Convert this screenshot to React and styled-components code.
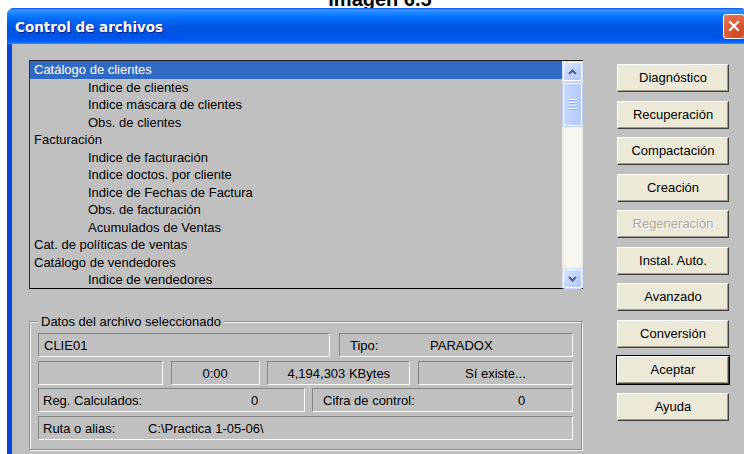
import styled, { createGlobalStyle } from "styled-components";

const GlobalStyle = createGlobalStyle`
    html, body {
        margin: 0;
        padding: 0;
        background: #fff;
        overflow: hidden;
    }
    body {
        font-family: "Liberation Sans", Arial, sans-serif;
        font-size: 13px;
        color: #000;
    }
`

const Page = styled.div`
    width: 744px;
    height: 454px;
    overflow: hidden;
`

const Caption = styled.div`
    height: 8px;
    overflow: hidden;
    text-align: center;
    padding-left: 16px;
    & span {
        display: block;
        margin-top: -11px;
        font: bold 20px/20px "Liberation Sans", Arial, sans-serif;
    }
`

const Window = styled.div`
    margin-left: 7px;
    width: 740px;
    height: 446px;
    display: flex;
    flex-direction: column;
    border-radius: 7px 7px 0 0;
    overflow: hidden;
    background: #0846d8;
`

const TitleBar = styled.div`
    flex: none;
    height: 36px;
    display: flex;
    align-items: center;
    justify-content: space-between;
    padding: 0 2px 0 8px;
    background: linear-gradient(
        to bottom,
        #0058ee 0%, #3d93ff 6%, #288eff 10%, #127dff 18%, #036ffc 28%,
        #0262ee 40%, #0057e5 52%, #0054e3 70%, #0055eb 84%, #005bf5 91%,
        #026afe 95%, #3c8cf6 100%
    );
`

const Title = styled.span`
    font: bold 13.5px "DejaVu Sans", Verdana, sans-serif;
    color: #fff;
    text-shadow: 1px 1px 0 #0a1e8a;
    margin-top: 1px;
`

const CloseButton = styled.div`
    width: 22px;
    height: 25px;
    box-sizing: border-box;
    border: 1px solid #fff;
    border-radius: 3px;
    background: radial-gradient(circle at 70% 75%, #cc4622 0%, #dd5a35 45%, #e87b58 100%);
    display: flex;
    align-items: center;
    justify-content: center;
`

const Client = styled.div`
    flex: 1;
    margin-left: 5px;
    background: #c0c0c0;
    display: flex;
    gap: 34px;
    padding: 16px 0 0 17px;
`

const LeftColumn = styled.div`
    width: 554px;
    display: flex;
    flex-direction: column;
`

const ListBox = styled.div`
    height: 229px;
    box-sizing: border-box;
    display: flex;
    border-top: 1px solid #202020;
    border-left: 1px solid #303030;
    border-bottom: 1px solid #000;
`

const Items = styled.div`
    flex: 1;
    padding-top: 0;
`

const Item = styled.div`
    height: 17.5px;
    line-height: 18px;
    padding-left: ${p => (p.$sub ? 58 : 4)}px;
    background: ${p => (p.$selected ? "#316ac5" : "transparent")};
    color: ${p => (p.$selected ? "#fff" : "#000")};
    white-space: nowrap;
`

const ScrollTrack = styled.div`
    width: 21px;
    display: flex;
    flex-direction: column;
    align-items: center;
    background: linear-gradient(to right, #eeede5, #f7f6f1 30%, #f7f6f1 80%, #edece6);
`

const ScrollButton = styled.div`
    width: 19px;
    height: 19px;
    box-sizing: border-box;
    margin-top: ${p => (p.$down ? "auto" : "1px")};
    border: 1px solid #fff;
    border-radius: 2px;
    background: linear-gradient(135deg, #dbe6ff 0%, #c3d4fd 50%, #b1c6f7 100%);
    box-shadow: 0 0 0 1px #cfdcf8;
    display: flex;
    align-items: center;
    justify-content: center;
`

const Thumb = styled.div`
    width: 19px;
    height: 43px;
    margin-top: 2px;
    box-sizing: border-box;
    border: 1px solid #fff;
    border-radius: 2px;
    background: linear-gradient(to right, #c9d8fc, #bccffb 60%, #b4c8f8);
    box-shadow: 0 0 0 1px #b6c9f3;
    display: flex;
    flex-direction: column;
    align-items: center;
    justify-content: center;
    gap: 1px;
    & i {
        display: block;
        width: 8px;
        height: 1px;
        background: #eef4fe;
        border-bottom: 1px solid #8fb1f5;
    }
`

const Group = styled.fieldset`
    margin: 25px 0 0;
    width: 553px;
    box-sizing: border-box;
    padding: 4px 8px 9px;
    border: 1px solid #8c8c8c;
    box-shadow: inset 1px 1px 0 #f4f4f0, 1px 1px 0 #f4f4f0;
    & legend {
        padding: 0 3px;
        margin-left: 0;
        background: #c0c0c0;
        line-height: 15px;
    }
`

const Rows = styled.div`
    display: flex;
    flex-direction: column;
    gap: 3.5px;
`

const Row = styled.div`
    display: grid;
    grid-template-columns: ${p => p.$cols};
    justify-content: space-between;
`

const Field = styled.div`
    height: 24px;
    box-sizing: border-box;
    border-top: 1px solid #858585;
    border-left: 1px solid #858585;
    border-bottom: 1px solid #fbfbf8;
    border-right: 1px solid #fbfbf8;
    display: flex;
    align-items: center;
    justify-content: ${p => (p.$center ? "center" : "flex-start")};
    padding: 1px 0 0 ${p => p.$pad ?? 4}px;
    white-space: nowrap;
`

const Label = styled.span`
    display: inline-block;
    width: ${p => p.$w}px;
`

const Buttons = styled.div`
    margin-top: 4px;
    display: flex;
    flex-direction: column;
    gap: 8.5px;
`

const Button = styled.div`
    width: 112px;
    height: 28px;
    box-sizing: border-box;
    background: #ece9d8;
    border: 1px solid;
    border-color: #fff #404040 #404040 #fff;
    box-shadow: ${p => (p.$default ? "0 0 0 1px #000, " : "")}inset -1px -1px 0 #9d9a8c;
    display: flex;
    align-items: center;
    justify-content: center;
    padding-bottom: 1px;
    color: ${p => (p.$disabled ? "#aca899" : "#000")};
    text-shadow: ${p => (p.$disabled ? "1px 1px 0 #fff" : "none")};
`

const files = [
    { name: "Catálogo de clientes", selected: true },
    { name: "Indice de clientes", sub: true },
    { name: "Indice máscara de clientes", sub: true },
    { name: "Obs. de clientes", sub: true },
    { name: "Facturación" },
    { name: "Indice de facturación", sub: true },
    { name: "Indice doctos. por cliente", sub: true },
    { name: "Indice de Fechas de Factura", sub: true },
    { name: "Obs. de facturación", sub: true },
    { name: "Acumulados de Ventas", sub: true },
    { name: "Cat. de políticas de ventas" },
    { name: "Catálogo de vendedores" },
    { name: "Indice de vendedores", sub: true },
]

const actions = [
    { label: "Diagnóstico" },
    { label: "Recuperación" },
    { label: "Compactación" },
    { label: "Creación" },
    { label: "Regeneración", disabled: true },
    { label: "Instal. Auto." },
    { label: "Avanzado" },
    { label: "Conversión" },
    { label: "Aceptar", isDefault: true },
    { label: "Ayuda" },
]

function Arrow({ down }) {
    return (
        <svg width="9" height="6" viewBox="0 0 9 6">
            <polyline
                points={down ? "1,1 4.5,4.5 8,1" : "1,5 4.5,1.5 8,5"}
                fill="none"
                stroke="#4d6185"
                strokeWidth="2"
            />
        </svg>
    );
}

function App() {
    return (
        <Page>
            <GlobalStyle />
            <Caption><span>Imagen 6.5</span></Caption>
            <Window>
                <TitleBar>
                    <Title>Control de archivos</Title>
                    <CloseButton>
                        <svg width="12" height="12" viewBox="0 0 12 12">
                            <path d="M2 2 L10 10 M10 2 L2 10" stroke="#fff" strokeWidth="2.2" strokeLinecap="square" />
                        </svg>
                    </CloseButton>
                </TitleBar>
                <Client>
                    <LeftColumn>
                        <ListBox>
                            <Items>
                                {files.map(f => (
                                    <Item key={f.name} $sub={f.sub} $selected={f.selected}>{f.name}</Item>
                                ))}
                            </Items>
                            <ScrollTrack>
                                <ScrollButton><Arrow /></ScrollButton>
                                <Thumb><i /><i /><i /><i /></Thumb>
                                <ScrollButton $down><Arrow down /></ScrollButton>
                            </ScrollTrack>
                        </ListBox>
                        <Group>
                            <legend>Datos del archivo seleccionado</legend>
                            <Rows>
                                <Row $cols="292px 234px">
                                    <Field $pad={5}>CLIE01</Field>
                                    <Field $pad={10}><Label $w={80}>Tipo:</Label>PARADOX</Field>
                                </Row>
                                <Row $cols="125px 89px 143px 155px">
                                    <Field />
                                    <Field $center $pad={0}>0:00</Field>
                                    <Field $center $pad={0}>4,194,303 KBytes</Field>
                                    <Field $center $pad={0}>Sí existe...</Field>
                                </Row>
                                <Row $cols="267px 261px">
                                    <Field><Label $w={208}>Reg. Calculados:</Label>0</Field>
                                    <Field $pad={10}><Label $w={195}>Cifra de control:</Label>0</Field>
                                </Row>
                                <Row $cols="535px">
                                    <Field><Label $w={105}>Ruta o alias:</Label>C:\Practica 1-05-06\</Field>
                                </Row>
                            </Rows>
                        </Group>
                    </LeftColumn>
                    <Buttons>
                        {actions.map(a => (
                            <Button key={a.label} $disabled={a.disabled} $default={a.isDefault}>{a.label}</Button>
                        ))}
                    </Buttons>
                </Client>
            </Window>
        </Page>
    );
}

export default App;
